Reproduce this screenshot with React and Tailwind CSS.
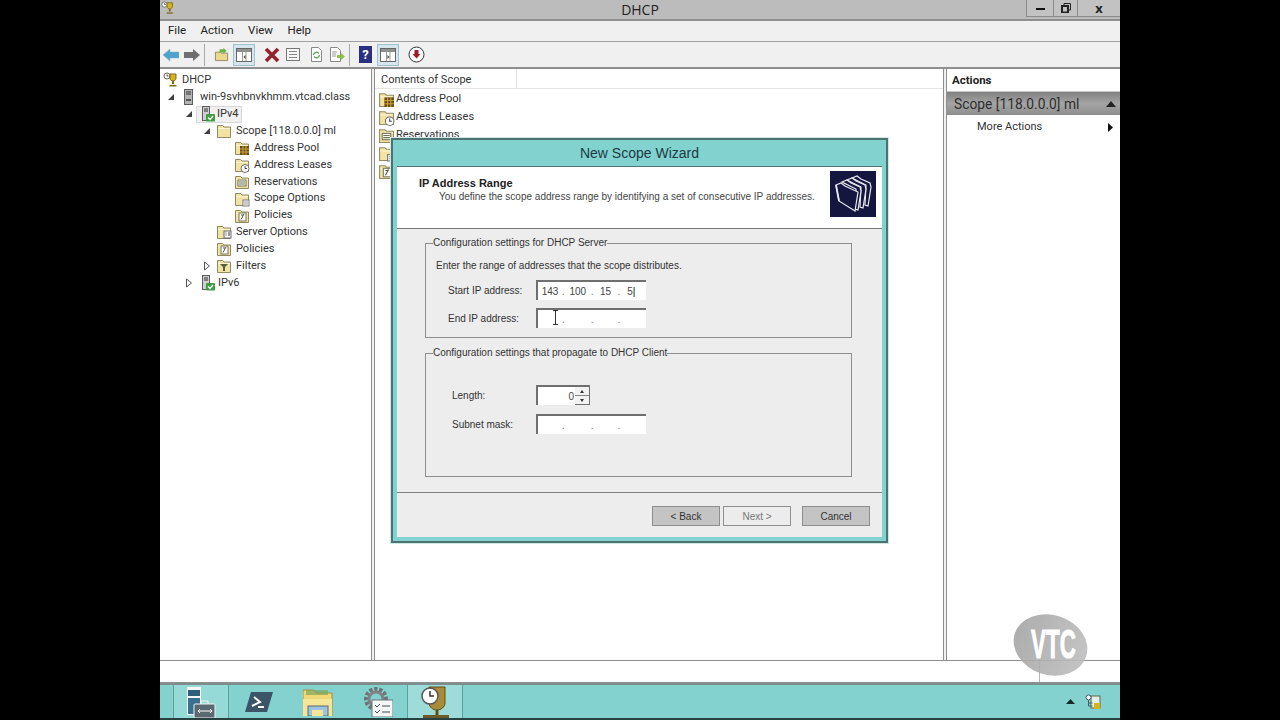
import React from 'react';

const Folder = ({ children, size = 16, className = '' }) => (
  <svg width={size} height={size} viewBox="0 0 16 16" className={className}>
    <path d="M1.500 2.500h5l1.500 1.500h6.500v10.500h-13z" fill="#f2e3a4" stroke="#8f8a62" />
    <path d="M2 5.500h12" stroke="#fbf4d2" />
    {children}
  </svg>
);

const PoolBadge = () => (
  <g>
    <rect x="6" y="6" width="9" height="9" fill="#6b4e16" />
    <path d="M6 9h9M6 12h9M9 6v9M12 6v9" stroke="#c9a040" />
  </g>
);
const ClockBadge = () => (
  <g>
    <circle cx="11" cy="11.500" r="4" fill="#fff" stroke="#6b6b6b" />
    <path d="M11 9v2.500h2" stroke="#444" fill="none" />
  </g>
);
const GridBadge = () => (
  <g>
    <rect x="4" y="6" width="8" height="6" fill="#fff" stroke="#6f6f55" />
    <path d="M5 8h6M5 10h6" stroke="#6f6f55" />
  </g>
);
const DocBadge = () => (
  <g>
    <rect x="9" y="9" width="6" height="6" fill="#fff" stroke="#7a7a7a" />
    <path d="M10 11h4M10 13h4" stroke="#999" />
  </g>
);
const PolicyBadge = () => (
  <g>
    <rect x="5" y="5" width="7" height="8" fill="#fff" stroke="#77775c" />
    <path d="M10 6l-3 5.500M7 7h2" stroke="#55553d" fill="none" />
  </g>
);
const ServerOptBadge = () => (
  <g>
    <rect x="8" y="7" width="7" height="7" fill="#fff" stroke="#666" />
    <path d="M9.500 9h1M12 9h2M9.500 11h1M12 11h2" stroke="#333" />
  </g>
);
const FilterBadge = () => (
  <g>
    <path d="M4 6h8l-3 3v4h-2v-4z" fill="#55603d" />
  </g>
);

const Trophy = ({ size = 16 }) => (
  <svg width={size} height={size} viewBox="0 0 16 16">
    <circle cx="4" cy="4" r="3" fill="#fff" stroke="#666" />
    <path d="M4 2.500v1.500h1.500" stroke="#444" fill="none" />
    <path d="M7 2h6v4c0 2-1.500 3-3 3s-3-1-3-3z" fill="#d6b31e" stroke="#7d6b10" />
    <path d="M10 9v3" stroke="#7d6b10" strokeWidth="2" />
    <path d="M6.500 13h7v1.500h-7z" fill="#7d6b10" />
  </svg>
);

const ServerIcon = () => (
  <svg width="12" height="16" viewBox="0 0 12 16">
    <rect x="1.500" y="0.500" width="8" height="15" fill="#b4b4b4" stroke="#5c5c5c" />
    <path d="M3 3h5M3 5h5" stroke="#333" />
    <rect x="3" y="10" width="5" height="2" fill="#555" />
  </svg>
);

const ScopeServerIcon = () => (
  <svg width="15" height="16" viewBox="0 0 15 16">
    <rect x="1.500" y="0.500" width="7" height="14" fill="#cfcfcf" stroke="#5c5c5c" />
    <path d="M3 3h4M3 5h4" stroke="#333" />
    <rect x="5" y="8" width="9" height="7.500" rx="1" fill="#3f9d45" />
    <path d="M7 11.500l2 2 3-3.500" stroke="#fff" strokeWidth="1.300" fill="none" />
  </svg>
);

const OpenArrow = () => (
  <svg width="8" height="8" viewBox="0 0 8 8"><path d="M1 7h6V1z" fill="#404040" /></svg>
);
const ClosedArrow = () => (
  <svg width="8" height="10" viewBox="0 0 8 10"><path d="M1.500 1l5 4-5 4z" fill="#fff" stroke="#555" /></svg>
);

const tree = [
  { label: 'DHCP', pad: 'pl-[3px]', slot: 'w-[19px]', icon: <Trophy /> },
  { label: 'win-9svhbnvkhmm.vtcad.class', pad: 'pl-[7px]', arrow: 'open', arrowSlot: 'w-[16px]', slot: 'w-[17px]', icon: <ServerIcon /> },
  { label: 'IPv4', pad: 'pl-[25px]', arrow: 'open', arrowSlot: 'w-[16px]', slot: 'w-[17px]', icon: <ScopeServerIcon />, selected: true },
  { label: 'Scope [118.0.0.0] ml', pad: 'pl-[43px]', arrow: 'open', arrowSlot: 'w-[13px]', slot: 'w-[20px]', icon: <Folder /> },
  { label: 'Address Pool', pad: 'pl-[74px]', slot: 'w-[20px]', icon: <Folder><PoolBadge /></Folder> },
  { label: 'Address Leases', pad: 'pl-[74px]', slot: 'w-[20px]', icon: <Folder><ClockBadge /></Folder> },
  { label: 'Reservations', pad: 'pl-[74px]', slot: 'w-[20px]', icon: <Folder><GridBadge /></Folder> },
  { label: 'Scope Options', pad: 'pl-[74px]', slot: 'w-[20px]', icon: <Folder><DocBadge /></Folder> },
  { label: 'Policies', pad: 'pl-[74px]', slot: 'w-[20px]', icon: <Folder><PolicyBadge /></Folder> },
  { label: 'Server Options', pad: 'pl-[56px]', slot: 'w-[20px]', icon: <Folder><ServerOptBadge /></Folder> },
  { label: 'Policies', pad: 'pl-[56px]', slot: 'w-[20px]', icon: <Folder><PolicyBadge /></Folder> },
  { label: 'Filters', pad: 'pl-[43px]', arrow: 'closed', arrowSlot: 'w-[13px]', slot: 'w-[20px]', icon: <Folder><FilterBadge /></Folder> },
  { label: 'IPv6', pad: 'pl-[25px]', arrow: 'closed', arrowSlot: 'w-[16px]', slot: 'w-[17px]', icon: <ScopeServerIcon /> },
];

const contents = [
  { label: 'Address Pool', icon: <PoolBadge /> },
  { label: 'Address Leases', icon: <ClockBadge /> },
  { label: 'Reservations', icon: <GridBadge /> },
  { label: 'Scope Options', icon: <DocBadge /> },
  { label: 'Policies', icon: <PolicyBadge /> },
];

function TitleBar() {
  return (
    <div className="relative flex h-[21px] items-center justify-center border-b-2 border-[#8f8f8f] bg-[#bcbcbc]">
      <div className="absolute left-[1px] top-[1px]"><Trophy size={14} /></div>
      <span className="font-['Open_Sans',sans-serif] text-[14px] text-[#222]">DHCP</span>
      <div className="absolute right-0 top-0 flex h-[17px] border-b border-l border-[#8a8a8a] bg-[#c2c2c2]">
        <div className="flex w-[27px] items-center justify-center border-r border-[#8a8a8a]">
          <div className="mt-[2px] h-[2px] w-[9px] bg-[#111]" />
        </div>
        <div className="flex w-[24px] items-center justify-center border-r border-[#8a8a8a]">
          <svg width="10" height="10" viewBox="0 0 10 10" fill="none" stroke="#222">
            <path d="M3 2.500V.500h6.500v6.500H7.500" />
            <rect x="1" y="3" width="6" height="6.500" strokeWidth="2" />
          </svg>
        </div>
        <div className="flex w-[42px] items-center justify-center font-['Open_Sans',sans-serif] text-[13px] font-bold leading-none text-[#222]">x</div>
      </div>
    </div>
  );
}

function MenuBar() {
  return (
    <div className="flex h-[21px] items-center gap-[14.500px] border-b border-[#a0a0a0] bg-[#f0f0f0] pl-[8px] text-[11.500px] text-[#222]">
      <span>File</span>
      <span>Action</span>
      <span>View</span>
      <span>Help</span>
    </div>
  );
}

const ToolSep = ({ className }) => <div className={`h-[22px] w-px bg-[#a8a8a8] ${className}`} />;

function ActiveTool({ children, className }) {
  return (
    <div className={`flex h-[22px] w-[22px] items-center justify-center border border-[#9fc0cf] bg-[#d5e6ef] ${className}`}>
      {children}
    </div>
  );
}

const PaneIcon = ({ flip }) => (
  <svg width="16" height="14" viewBox="0 0 16 14">
    <rect x="0.500" y="0.500" width="15" height="13" fill="#fff" stroke="#666" />
    <rect x="1" y="1" width="14" height="3" fill="#8f8f8f" />
    <path d="M6.500 4v9M10 4v9" stroke="#999" />
    <path d={flip ? 'M7.500 7l2 2-2 2z' : 'M9.500 7l-2 2 2 2z'} fill="#444" />
  </svg>
);

function Toolbar() {
  return (
    <div className="flex h-[27px] items-center border-b-2 border-[#8f8f8f] bg-[#f0f0f0]">
      <svg className="ml-[3px]" width="16" height="14" viewBox="0 0 16 14">
        <path d="M0 7l7-6v3h9v6H7v3z" fill="#4da3c9" stroke="#7fb5cc" strokeWidth=".5" />
      </svg>
      <svg className="ml-[5px]" width="16" height="14" viewBox="0 0 16 14">
        <path d="M16 7L9 1v3H0v6h9v3z" fill="#6e6e6e" />
      </svg>
      <ToolSep className="ml-[4px]" />
      <svg className="ml-[9px]" width="15" height="15" viewBox="0 0 16 16">
        <path d="M1.500 5.500h5l1 1h7v8h-13z" fill="#ecd88c" stroke="#8f8a62" />
        <path d="M6 6V2.500h4V1l3.500 3L10 7V5.500H8" fill="#6cb04a" />
      </svg>
      <ActiveTool className="ml-[4px]"><PaneIcon /></ActiveTool>
      <svg className="ml-[9px]" width="16" height="16" viewBox="0 0 16 16">
        <path d="M2 2l12 12M14 2L2 14" stroke="#93222e" strokeWidth="3.600" />
      </svg>
      <svg className="ml-[5px]" width="16" height="15" viewBox="0 0 16 15">
        <rect x="1.500" y="1.500" width="13" height="12" fill="#f6f6f6" stroke="#777" />
        <path d="M4 4.500h8M4 7.500h8M4 10.500h8" stroke="#888" />
      </svg>
      <svg className="ml-[8px]" width="15" height="15" viewBox="0 0 15 15">
        <path d="M2.500.500h7l3 3v11h-10z" fill="#fff" stroke="#888" />
        <path d="M4.500 8a3 3 0 0 1 5.500-1.500M10.500 8A3 3 0 0 1 5 9.500" stroke="#4ba23f" strokeWidth="1.300" fill="none" />
      </svg>
      <svg className="ml-[5px]" width="16" height="15" viewBox="0 0 16 15">
        <path d="M1.500.500h7l3 3v11h-10z" fill="#fff" stroke="#888" />
        <path d="M3 5h5M3 7h4M3 9h4" stroke="#999" />
        <path d="M8 8h4V6l4 3.500L12 13v-2H8z" fill="#8fc04a" />
      </svg>
      <ToolSep className="ml-[4px]" />
      <div className="ml-[9px] flex h-[17px] w-[13px] items-center justify-center bg-[#2b2f7f] text-[13px] font-bold leading-none text-white">?</div>
      <ActiveTool className="ml-[5px]"><PaneIcon flip /></ActiveTool>
      <svg className="ml-[9px]" width="17" height="17" viewBox="0 0 17 17">
        <circle cx="8.500" cy="8.500" r="7.500" fill="#fff" stroke="#333" />
        <path d="M6.500 4h4v4h2l-4 4.500L4.500 8h2z" fill="#9b1c2d" />
      </svg>
    </div>
  );
}

function TreePane() {
  return (
    <div className="flex w-[212px] flex-col border-r border-[#8f8f8f] bg-white pt-[3px] text-[11px] text-[#333]">
      {tree.map((row, i) => (
        <div key={i} className={`flex h-[16.900px] items-center ${row.pad}`}>
          {row.arrow && (
            <span className={`flex shrink-0 items-center justify-start ${row.arrowSlot}`}>
              {row.arrow === 'open' ? <OpenArrow /> : <ClosedArrow />}
            </span>
          )}
          {row.selected ? (
            <span className="-ml-[5px] flex h-[17px] w-[46px] items-center border border-[#d9d9d9] bg-[#f0f0f0] pl-[4px]">
              <span className="flex w-[16px] shrink-0 items-center">{row.icon}</span>
              {row.label}
            </span>
          ) : (
            <>
              <span className={`flex shrink-0 items-center ${row.slot}`}>{row.icon}</span>
              <span className="whitespace-nowrap">{row.label}</span>
            </>
          )}
        </div>
      ))}
    </div>
  );
}

function ContentPane() {
  return (
    <div className="ml-[2px] flex w-[570px] flex-col border-x border-[#8f8f8f] bg-white text-[11px] text-[#333]">
      <div className="flex h-[20px] border-b border-[#e5e5e5]">
        <div className="flex w-[142px] items-center border-r border-[#e5e5e5] pl-[6px] pt-[3px]">Contents of Scope</div>
      </div>
      <div className="flex flex-col pl-[3px] pt-[1px]">
        {contents.map((row) => (
          <div key={row.label} className="flex h-[18px] items-center">
            <Folder size={17} className="mr-[1px] shrink-0">{row.icon}</Folder>
            <span className="whitespace-nowrap">{row.label}</span>
          </div>
        ))}
      </div>
    </div>
  );
}

function ActionsPane() {
  return (
    <div className="ml-[2px] flex flex-1 flex-col border-l border-[#8f8f8f] bg-white text-[11px] text-[#333]">
      <div className="flex h-[23px] items-center border-b border-[#c9c9c9] pl-[5px] pt-[2px] text-[11.500px] font-bold text-[#222]">Actions</div>
      <div className="flex h-[23px] items-center justify-between bg-gradient-to-b from-[#818181] via-[#a4a4a4] to-[#8e8e8e] pl-[7px] pr-[4px] pt-[1px] text-[13.800px] text-[#2e2e2e]">
        <span>Scope [118.0.0.0] ml</span>
        <svg width="10" height="6" viewBox="0 0 10 6"><path d="M5 0l5 6H0z" fill="#222" /></svg>
      </div>
      <div className="flex h-[24px] items-center justify-between pl-[30px] pr-[7px]">
        <span>More Actions</span>
        <svg width="5" height="9" viewBox="0 0 5 9"><path d="M0 0l5 4.500L0 9z" fill="#111" /></svg>
      </div>
    </div>
  );
}

function IpBox({ values = ['', '', '', ''], caret, cursor }) {
  const slots = ['w-[24px]', 'w-[26px]', 'w-[24px]', 'w-[22px]'];
  return (
    <div className="relative flex h-[20px] w-[110px] items-center border-l-2 border-t-2 border-[#6f6f6f] bg-white text-[10px] text-[#444]">
      {values.map((v, i) => (
        <React.Fragment key={i}>
          <span className={`text-center ${slots[i]}`}>{v}{caret && i === 3 && <span className="text-[#000]">|</span>}</span>
          {i < 3 && <span className="text-[#777]">.</span>}
        </React.Fragment>
      ))}
      {cursor && (
        <svg className="absolute left-[14px] top-0" width="7" height="15" viewBox="0 0 7 15">
          <path d="M1 .500h5M3.500 .500v14M1 14.500h5" stroke="#333" fill="none" />
        </svg>
      )}
    </div>
  );
}

function WizardButton({ children, disabled, className = '' }) {
  return (
    <button
      className={`h-[20px] w-[68px] border border-[#8e8e8e] text-[10px] ${disabled ? 'bg-[#ececec] text-[#777]' : 'bg-[#c4c4c4] text-[#333]'} ${className}`}
    >
      {children}
    </button>
  );
}

function FieldRow({ label, labelClass, children, className }) {
  return (
    <div className={`flex items-center ${className}`}>
      <span className={`whitespace-nowrap text-[10px] text-[#333] ${labelClass}`}>{label}</span>
      {children}
    </div>
  );
}

function Wizard() {
  return (
    <div className="absolute left-[231px] top-[138px] flex h-[405px] w-[497px] flex-col border-2 border-[#4b7370] bg-[#82d3d0] font-['Liberation_Sans',sans-serif] shadow-[0_0_0_1px_#cfe7e6]">
      <div className="flex h-[26px] items-center justify-center text-[14px] text-[#1d3a44]">New Scope Wizard</div>
      <div className="mx-[4px] flex h-[371px] flex-col border-t border-[#55706f] bg-[#ededed]">
        <div className="flex h-[62px] shrink-0 justify-between border-b border-[#777] bg-white pl-[22px] pr-[6px]">
          <div className="pt-[9px]">
            <div className="text-[11px] font-bold leading-[14px] text-[#222]">IP Address Range</div>
            <div className="ml-[20px] whitespace-nowrap text-[10px] leading-[14px] text-[#444]">
              You define the scope address range by identifying a set of consecutive IP addresses.
            </div>
          </div>
          <div className="mt-[4px] flex h-[46px] w-[46px] items-center justify-center bg-[#15163f]">
            <svg width="42" height="42" viewBox="0 0 42 42" fill="#15163f" stroke="#e8e8f0" strokeWidth="1.200">
              <path d="M20 5l5-2 4 3 9 4 1 4-3 19-3-1 1-20z" />
              <path d="M15 7l5-2 4 3 9 4 1 4-3 19-3-1 1-20z" />
              <path d="M10 9l5-2 4 3 9 4 1 4-3 19-3-1 1-20z" />
              <path d="M4 12l5-2 4 3 13 6-3 19L7 28z" />
              <path d="M4 12l3 16" strokeWidth="1.800" />
            </svg>
          </div>
        </div>

        <div className="flex flex-1 flex-col pl-[28px] pt-[8px]">
          <fieldset className="h-[101px] w-[427px] shrink-0 border border-[#8e8e8e] pl-[10px]">
            <legend className="-ml-[3px] text-[10px] leading-[12px] text-[#333]">Configuration settings for DHCP Server</legend>
            <div className="mt-[10px] text-[10px] leading-[14px] text-[#333]">Enter the range of addresses that the scope distributes.</div>
            <FieldRow label="Start IP address:" labelClass="w-[100px] pl-[12px]" className="mt-[7px]">
              <IpBox values={['143', '100', '15', '5']} caret />
            </FieldRow>
            <FieldRow label="End IP address:" labelClass="w-[100px] pl-[12px]" className="mt-[8px]">
              <IpBox cursor />
            </FieldRow>
          </fieldset>
          <fieldset className="mt-[9px] h-[130px] w-[427px] shrink-0 border border-[#8e8e8e] pl-[10px]">
            <legend className="-ml-[3px] text-[10px] leading-[12px] text-[#333]">Configuration settings that propagate to DHCP Client</legend>
            <FieldRow label="Length:" labelClass="w-[100px] pl-[16px]" className="mt-[26px]">
              <div className="flex h-[20px] w-[54px] items-center border-l-2 border-t-2 border-[#6f6f6f] bg-white text-[10px] text-[#444]">
                <span className="w-[37px] pr-[1px] text-right">0</span>
                <div className="flex h-full w-[15px] flex-col border-b border-r border-[#6f6f6f] bg-[#f2f2f2]">
                  <div className="flex flex-1 items-center justify-center border-b border-[#888]">
                    <svg width="4" height="3" viewBox="0 0 4 3"><path d="M2 0l2 3H0z" fill="#333" /></svg>
                  </div>
                  <div className="flex flex-1 items-center justify-center">
                    <svg width="4" height="3" viewBox="0 0 4 3"><path d="M0 0h4L2 3z" fill="#333" /></svg>
                  </div>
                </div>
              </div>
            </FieldRow>
            <FieldRow label="Subnet mask:" labelClass="w-[100px] pl-[16px]" className="mt-[9px]">
              <IpBox />
            </FieldRow>
          </fieldset>
          <div className="-ml-[28px] mt-[15px] border-t border-[#808080]" />
          <div className="flex justify-end gap-[3px] pr-[12px] pt-[13px]">
            <WizardButton>&lt; Back</WizardButton>
            <WizardButton disabled>Next &gt;</WizardButton>
            <WizardButton className="ml-[8px]">Cancel</WizardButton>
          </div>
        </div>
      </div>
    </div>
  );
}

function StatusBar() {
  return (
    <div className="flex h-[23px] border-y border-[#8f8f8f] bg-white">
      <div className="w-[880px] border-r border-[#b5b5b5]" />
    </div>
  );
}

function Taskbar() {
  return (
    <div className="flex h-[37px] items-stretch border-y-2 border-t-[#7b8e8d] border-b-[#26413f] bg-[#84d2cf] pl-[13px]">
      <div className="flex w-[56px] items-center justify-center border-x border-[#5fa09d] bg-[#96dad7]">
        <svg width="32" height="32" viewBox="0 0 32 32">
          <rect x="2" y="1" width="14" height="28" fill="#f4f8fa" />
          <rect x="3" y="4" width="12" height="6" fill="#2f5f7c" />
          <rect x="3" y="12" width="12" height="16" fill="#3a6f90" />
          <rect x="9" y="18" width="21" height="14" rx="1" fill="#5a6a72" stroke="#eef3f3" />
          <path d="M14 25h12M15 23l-2 2 2 2M25 23l2 2-2 2" stroke="#fff" fill="none" />
          <path d="M16 18v-3h7v3" stroke="#eef3f3" fill="none" />
        </svg>
      </div>
      <div className="ml-[16px] flex w-[28px] items-center">
        <svg width="28" height="22" viewBox="0 0 28 22">
          <path d="M6 1h22l-6 20H0z" fill="#3c5468" />
          <path d="M9 6l6 5-8 4" stroke="#fff" strokeWidth="2" fill="none" />
          <path d="M13 16h6" stroke="#fff" strokeWidth="2" />
        </svg>
      </div>
      <div className="ml-[30px] flex w-[30px] items-center">
        <svg width="30" height="29" viewBox="0 0 30 29">
          <path d="M0 3h11l2 3h16v23H0z" fill="#f1d877" stroke="#a48f3c" />
          <path d="M3 3h22v5H3z" fill="#7fa65c" opacity=".7" />
          <rect x="0" y="12" width="29" height="17" fill="#f6e497" />
          <rect x="5" y="19" width="20" height="10" fill="#9cc3df" stroke="#5a6a72" />
          <rect x="9" y="23" width="11" height="6" fill="#f6e497" />
        </svg>
      </div>
      <div className="ml-[30px] flex w-[30px] items-center">
        <svg width="30" height="31" viewBox="0 0 30 31">
          <circle cx="13" cy="13" r="9" fill="none" stroke="#6e7478" strokeWidth="6" strokeDasharray="3 1.500" />
          <circle cx="13" cy="13" r="7" fill="none" stroke="#7e8488" strokeWidth="3" />
          <rect x="9" y="14" width="21" height="17" fill="#f5f7f7" stroke="#68757a" />
          <path d="M12 19l2 2 3-3M12 25l2 2 3-3M19 20h8M19 26h8" stroke="#3b4a52" fill="none" />
        </svg>
      </div>
      <div className="ml-[14px] flex w-[56px] items-center justify-center border-x border-[#5fa09d] bg-[#9edcd9]">
        <svg width="32" height="34" viewBox="0 0 32 34">
          <path d="M10 2h16v16c0 4-4 7-8 7s-8-3-8-7z" fill="#a98c3a" stroke="#5d4c14" />
          <circle cx="11" cy="11" r="8" fill="#fff" stroke="#555" strokeWidth="1.500" />
          <path d="M11 6v5h4" stroke="#333" strokeWidth="1.500" fill="none" />
          <path d="M18 25v5" stroke="#5d4c14" strokeWidth="3" />
          <path d="M4 30h26v3H4z" fill="#6b5a2a" />
        </svg>
      </div>
      <div className="ml-auto mr-[19px] flex items-center gap-[10px]">
        <svg width="9" height="5" viewBox="0 0 9 5"><path d="M4.500 0l4.500 5H0z" fill="#1a2a2a" /></svg>
        <svg width="16" height="16" viewBox="0 0 16 16">
          <rect x="6" y="2" width="9" height="12" fill="#e5efe3" stroke="#536b4c" />
          <circle cx="3.500" cy="3.500" r="2.500" fill="#fff" stroke="#3c5f7a" />
          <path d="M3.500 6v6h4M3.500 9h4" stroke="#3c5f7a" fill="none" />
          <rect x="9" y="9" width="6" height="6" fill="#d9b21c" />
        </svg>
      </div>
    </div>
  );
}

export default function App() {
  return (
    <div className="flex h-[720px] w-[1280px] justify-center overflow-hidden bg-black font-['Roboto',sans-serif]">
      <div className="relative flex h-[720px] w-[960px] flex-col bg-[#f0f0f0]">
        <TitleBar />
        <MenuBar />
        <Toolbar />
        <div className="flex min-h-0 flex-1">
          <TreePane />
          <ContentPane />
          <ActionsPane />
        </div>
        <StatusBar />
        <Taskbar />
        <Wizard />
        <div className="absolute left-[853px] top-[615px] h-[60px] w-[75px] rotate-[18deg] rounded-[50%] bg-gradient-to-r from-[#a5a5a5] to-[#bdbdbd] opacity-90" />
        <div className="absolute left-[857px] top-[622px] w-[64px] origin-center scale-x-[.56] text-center font-['Liberation_Sans',sans-serif] text-[40px] font-bold leading-[44px] text-white [-webkit-text-stroke:1px_white]">VTC</div>
      </div>
    </div>
  );
}
